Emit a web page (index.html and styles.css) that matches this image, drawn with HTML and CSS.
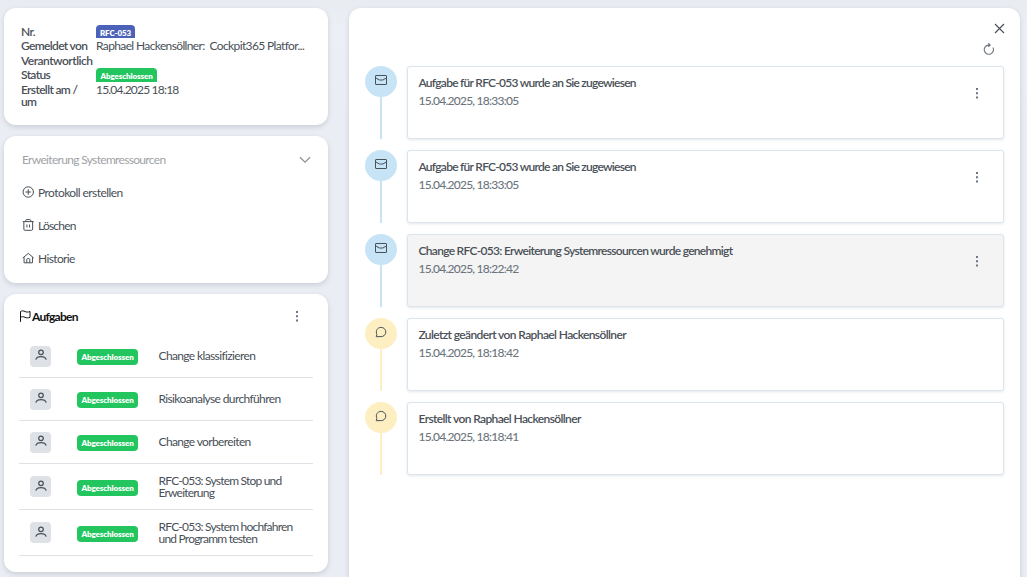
FILE: index.html
```html
<!DOCTYPE html>
<html lang="de">
<head>
<meta charset="utf-8">
<title>RFC-053</title>
<link rel="stylesheet" href="styles.css">
</head>
<body>
<svg class="sprite" width="0" height="0">
  <symbol id="user" viewBox="0 0 14 14"><circle cx="7" cy="3.300" r="2.300"/><path d="M1.800 10.600c.6-2 2.700-2.900 5.200-2.900s4.600.9 5.200 2.900"/></symbol>
  <symbol id="mail" viewBox="0 0 12 12"><rect x=".5" y="1.500" width="11" height="9" rx=".5"/><path d="M1 4l3.300 2h3.600l3.400-2"/></symbol>
  <symbol id="chat" viewBox="0 0 12 12"><path d="M1.200 10.700l.7-2.200C.3 5 2.200 1.400 6.200 1.400a4.600 4.600 0 0 1 0 9.200z"/></symbol>
  <symbol id="dots" viewBox="0 0 4 12"><path d="M1 1h2v2H1zM1 5.200h2v2H1zM1 9.400h2v2H1z"/></symbol>
</svg>
<div class="layout">
  <aside class="side">
    <section class="card info">
      <div class="label">Nr.</div><div><span class="badge badge-id">RFC-053</span></div>
      <div class="label">Gemeldet von</div><div class="value reporter">Raphael Hackensöllner:&nbsp; Cockpit365 Platfor...</div>
      <div class="label wide">Verantwortlich</div><div></div>
      <div class="label">Status</div><div><span class="badge badge-status">Abgeschlossen</span></div>
      <div class="label">Erstellt am /<br>um</div><div class="value created">15.04.2025 18:18</div>
    </section>
    <section class="card actions">
      <div class="select"><span>Erweiterung Systemressourcen</span>
        <svg class="icon" width="12" height="8" viewBox="0 0 12 8"><path d="M1 1.300l5 4.800 5-4.800"/></svg></div>
      <a class="action"><svg class="icon" width="12" height="12" viewBox="0 0 12 12"><circle cx="6" cy="6" r="5.200"/><path d="M6 3.200v5.600M3.200 6h5.600"/></svg><span class="create">Protokoll erstellen</span></a>
      <a class="action"><svg class="icon" width="12" height="12" viewBox="0 0 12 12"><path d="M.5 2.600h11M3.500 2.600V1.500q0-.9.900-.9h3.200q.9 0 .9.900v1.100M1.600 2.600v7.500q0 1.200 1.200 1.200h6.400q1.200 0 1.200-1.200V2.600M4.700 5.500v3M7.300 5.500v3"/></svg><span class="delete">Löschen</span></a>
      <a class="action"><svg class="icon" width="12" height="12" viewBox="0 0 12 12"><path d="M.5 6L6 1.400 11.500 6M1.800 5.200v5.600h8.400V5.200M4.500 10.800V7.500q0-1 1.500-1t1.500 1v3.300"/></svg><span>Historie</span></a>
    </section>
    <section class="card tasks">
      <header class="tasks-head">
        <svg class="icon flag" width="12" height="12" viewBox="0 0 12 12"><path d="M1.500 11.800V1.500c1.500-.8 3-.8 4.500 0s3 .8 5 0V7.300c-2 .8-3.500.8-5 0s-3-.8-4.500 0"/></svg>
        <h2>Aufgaben</h2><svg class="dots" width="4" height="12"><use href="#dots"/></svg>
      </header>
      <div class="task"><span class="avatar"><svg class="icon" width="14" height="14"><use href="#user"/></svg></span><span class="badge">Abgeschlossen</span><p>Change klassifizieren</p></div>
      <div class="task"><span class="avatar"><svg class="icon" width="14" height="14"><use href="#user"/></svg></span><span class="badge">Abgeschlossen</span><p>Risikoanalyse durchführen</p></div>
      <div class="task"><span class="avatar"><svg class="icon" width="14" height="14"><use href="#user"/></svg></span><span class="badge">Abgeschlossen</span><p>Change vorbereiten</p></div>
      <div class="task tall"><span class="avatar"><svg class="icon" width="14" height="14"><use href="#user"/></svg></span><span class="badge">Abgeschlossen</span><p>RFC-053: System Stop und<br>Erweiterung</p></div>
      <div class="task tall"><span class="avatar"><svg class="icon" width="14" height="14"><use href="#user"/></svg></span><span class="badge">Abgeschlossen</span><p>RFC-053: System hochfahren<br>und Programm testen</p></div>
    </section>
  </aside>
  <main class="panel">
    <div class="tools">
      <svg class="icon close" width="11" height="11" viewBox="0 0 11 11"><path d="M1 1l9 9M10 1l-9 9"/></svg>
      <svg class="icon reload" width="12" height="12" viewBox="0 0 12 12"><path d="M9.900 4.500A4.600 4.600 0 1 1 5.500 2.100h1M5.200.3l2 1.800-2 1.800"/></svg>
    </div>
    <div class="timeline">
      <div class="event"><div class="rail"><span class="marker"><svg class="icon" width="12" height="12"><use href="#mail"/></svg></span></div><article class="entry"><div><h3 class="assigned">Aufgabe für RFC-053 wurde an Sie zugewiesen</h3><time>15.04.2025, 18:33:05</time></div><svg class="dots" width="4" height="12"><use href="#dots"/></svg></article></div>
      <div class="event"><div class="rail"><span class="marker"><svg class="icon" width="12" height="12"><use href="#mail"/></svg></span></div><article class="entry"><div><h3 class="assigned">Aufgabe für RFC-053 wurde an Sie zugewiesen</h3><time>15.04.2025, 18:33:05</time></div><svg class="dots" width="4" height="12"><use href="#dots"/></svg></article></div>
      <div class="event"><div class="rail"><span class="marker"><svg class="icon" width="12" height="12"><use href="#mail"/></svg></span></div><article class="entry read"><div><h3 class="approved">Change RFC-053: Erweiterung Systemressourcen wurde genehmigt</h3><time>15.04.2025, 18:22:42</time></div><svg class="dots" width="4" height="12"><use href="#dots"/></svg></article></div>
      <div class="event note"><div class="rail"><span class="marker"><svg class="icon" width="12" height="12"><use href="#chat"/></svg></span></div><article class="entry"><div><h3>Zuletzt geändert von Raphael Hackensöllner</h3><time>15.04.2025, 18:18:42</time></div></article></div>
      <div class="event note"><div class="rail"><span class="marker"><svg class="icon" width="12" height="12"><use href="#chat"/></svg></span></div><article class="entry"><div><h3>Erstellt von Raphael Hackensöllner</h3><time>15.04.2025, 18:18:41</time></div></article></div>
    </div>
  </main>
</div>
</body>
</html>
```
FILE: styles.css
```css
* { box-sizing: border-box; }
body { margin: 0; height: 577px; overflow: hidden; background: linear-gradient(#e8ebf0, #eceff5 30px, #eaedf3 120px, #eaedf3); color: #495057; font: 12px/12px Lato, sans-serif; letter-spacing: -0.63px; }
h2, h3, p { margin: 0; font-size: inherit; }
.sprite { position: absolute; }
.icon { flex: none; fill: none; stroke: #495057; stroke-width: 1; }
.dots { flex: none; fill: #6b7686; }
.layout { display: grid; grid-template-columns: 324px 671px; gap: 21px; padding: 8px 0 0 4px; height: 597px; }
.side { display: flex; flex-direction: column; gap: 11px; }
.card, .panel { background: #fff; border-radius: 12px; box-shadow: 0 2px 5px rgba(50, 60, 80, .17); }

.info { height: 117px; padding: 17px; display: grid; grid-template-columns: 75px 1fr; grid-template-rows: 14px 15px 14px 15px 25px; line-height: 14px; white-space: nowrap; }
.label { font-weight: 600; letter-spacing: -0.65px; }
.wide { letter-spacing: -0.5px; }
.info .label:nth-last-child(2) { line-height: 12px; padding-top: 1px; }
.created { letter-spacing: -0.8px; }
.badge { display: block; width: 61px; height: 16px; border-radius: 4px; background: #22c55e; color: #fff; font-size: 8px; font-weight: 800; line-height: 17px; text-align: center; letter-spacing: -0.1px; }
.badge-id { width: 39px; height: 13px; line-height: 16px; border-radius: 4px 4px 0 0; background: #4b62b8; }
.badge-status { height: 14px; line-height: 16px; border-radius: 4px 4px 0 0; }

.actions { height: 147px; padding: 8px 17px 8px 18px; }
.select { display: flex; justify-content: space-between; align-items: center; height: 32px; color: #a0a2a6; letter-spacing: -0.68px; }
.select .icon { stroke: #8f949a; stroke-width: 1.3; }
.action { display: flex; align-items: center; gap: 4px; height: 33px; }
.action .icon { margin: -1px 0 0 -0.5px; width: 12.5px; }
.create { letter-spacing: -0.57px; }
.delete { letter-spacing: -0.8px; }

.tasks { height: 278px; padding: 5px 15px; }
.tasks-head { display: flex; align-items: center; height: 36px; padding-bottom: 2px; color: #111; letter-spacing: -0.75px; }
.tasks-head h2 { flex: 1; padding-top: 1px; }
.tasks-head .dots { margin-right: 14px; }
.flag { stroke: #111; margin-right: 1px; }
.task { display: grid; grid-template-columns: 47px 82px 1fr; align-items: center; height: 43px; padding-left: 11px; border-bottom: 1px solid #dee2e6; }
.tall { height: 46px; letter-spacing: -0.79px; }
.avatar { display: grid; place-items: center; width: 21px; height: 21px; border-radius: 4px; background: #dee2e6; }
.avatar .icon { stroke-width: 1.25; }
.task .badge { margin-top: 2px; }
.task p { margin-left: -0.5px; }

.panel { padding: 15px 16px; }
.tools { display: flex; flex-direction: column; align-items: flex-end; height: 43px; }
.close { margin-right: -1px; stroke-width: 1.15; }
.reload { margin: 9px 9px 0 0; stroke: #6c757d; stroke-width: 1.1; }
.timeline { display: grid; gap: 11px; }
.event { --tone: #c7e4f6; display: grid; grid-template-columns: 32px 597px; gap: 10px; height: 73px; }
.note { --tone: #feefc3; }
.rail { display: flex; flex-direction: column; align-items: center; }
.rail::after { content: ""; width: 2px; flex: 1; background: var(--tone); }
.marker { display: flex; justify-content: center; width: 32px; height: 31px; padding-top: 8px; border-radius: 50%; background: var(--tone); }
.entry { display: flex; justify-content: space-between; border: 1px solid #dce5ee; border-radius: 3px; background: #fff; box-shadow: 0 1px 3px rgba(80, 100, 130, .16); padding: 7px 24px 0 10.5px; line-height: 18px; }
.entry .dots { margin-top: 13px; }
.entry h3 { font-weight: 600; letter-spacing: -0.62px; }
.entry .assigned { letter-spacing: -0.74px; }
.entry .approved { letter-spacing: -0.7px; }
.entry time { display: block; color: #6c757d; font-weight: 500; letter-spacing: -0.75px; }
.read { background: #f4f4f4; }
```
